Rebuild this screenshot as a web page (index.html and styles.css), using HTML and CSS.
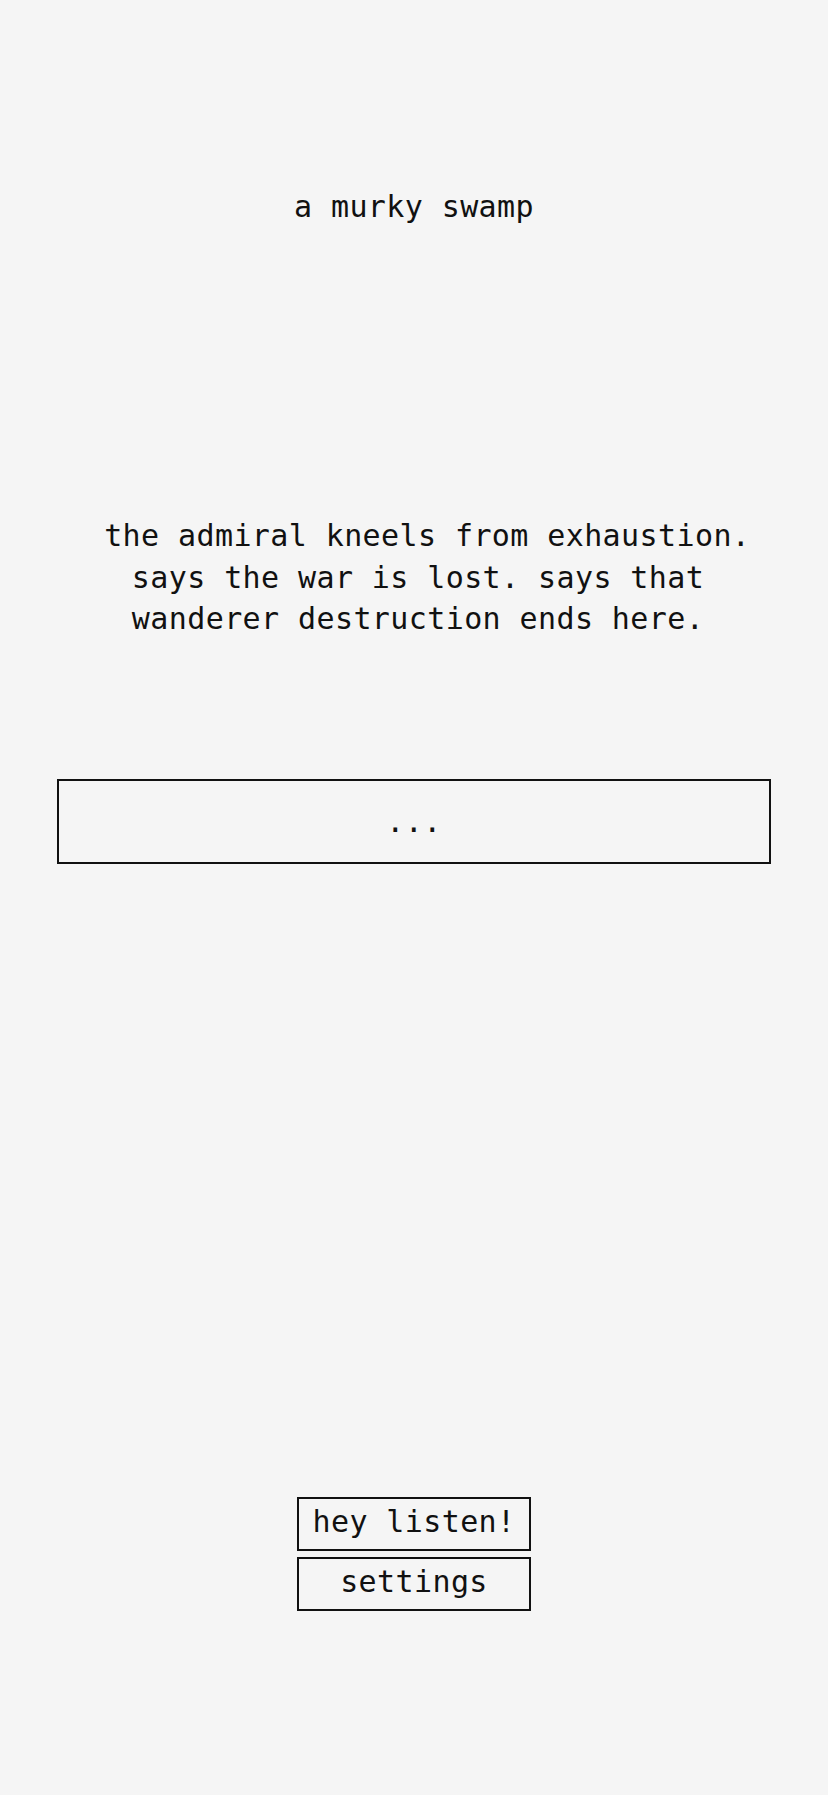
FILE: index.html
```html
<!DOCTYPE html>
<html lang="en">
<head>
<meta charset="utf-8">
<title>a murky swamp</title>
<link rel="stylesheet" href="styles.css">
</head>
<body>
<main class="page">
  <h1 class="location">a murky swamp</h1>
  <p class="story">&nbsp;the admiral kneels from exhaustion. says the war is lost. says that wanderer destruction ends here.</p>
  <div class="prompt">...</div>
  <nav class="actions">
    <button class="btn" type="button">hey listen!</button>
    <button class="btn" type="button">settings</button>
  </nav>
</main>
</body>
</html>
```

FILE: styles.css
```css
* {
  box-sizing: border-box;
}

html, body {
  margin: 0;
  padding: 0;
  background: #f5f5f5;
}

body {
  color: #111;
  font-family: "DejaVu Sans Mono", "Liberation Mono", monospace;
  font-size: 30px;
  letter-spacing: 0.4px;
}

.page {
  min-height: 100vh;
  display: flex;
  flex-direction: column;
  align-items: stretch;
  padding: 186px 0 183.7px;
}

.location {
  margin: 0;
  font-size: 30px;
  font-weight: normal;
  line-height: 41.5px;
  text-align: center;
}

.story {
  margin: 287.5px 0 0;
  padding: 0 60px 0 68px;
  line-height: 41.5px;
  text-align: center;
}

.prompt {
  margin: 139px 57px 0;
  height: 85px;
  padding: 20px 0 20px;
  border: 2px solid #111;
  line-height: 41px;
  text-align: center;
}

.actions {
  margin-top: auto;
  display: flex;
  flex-direction: column;
  align-items: center;
  gap: 6px;
}

.btn {
  width: 234px;
  height: 54px;
  margin: 0;
  padding: 2px 0 7px;
  border: 2px solid #111;
  border-radius: 0;
  background: transparent;
  color: #111;
  font: inherit;
  letter-spacing: inherit;
  line-height: 41px;
  text-align: center;
  cursor: pointer;
}
```
